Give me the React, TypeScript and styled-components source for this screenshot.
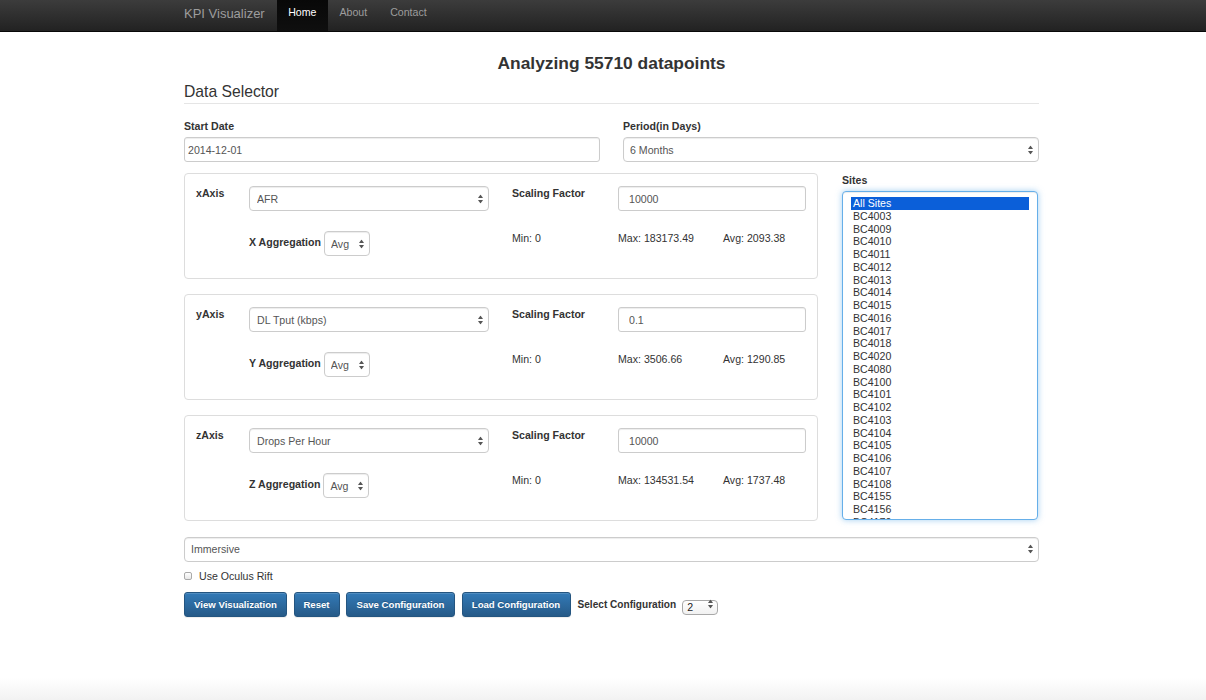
import React from "react";
import styled, { createGlobalStyle } from "styled-components";

const Global = createGlobalStyle`
  html, body { margin: 0; padding: 0; background: #fff; }
  body { font-family: "Liberation Sans", Arial, Helvetica, sans-serif; color: #333; }
  * { box-sizing: border-box; }
`;

const Page = styled.div`
  min-height: 700px;
  display: flex;
  flex-direction: column;
`;

const Navbar = styled.nav`
  height: 32px;
  flex-shrink: 0;
  background: linear-gradient(to bottom, #3c3c3c 0%, #222 100%);
  border-bottom: 1px solid #080808;
`;

const Container = styled.div`
  width: 855px;
  margin-left: calc(50% - 419px);
`;

const NavInner = styled(Container)`
  display: flex;
  height: 100%;
`;

const Brand = styled.a`
  font-size: 13px;
  line-height: 15px;
  padding-top: 5.5px;
  padding-right: 12px;
  color: #9d9d9d;
  text-decoration: none;
`;

const NavLink = styled.a<{ $active?: boolean }>`
  display: block;
  height: 100%;
  padding: 5px 11.5px 0;
  font-size: 10.6px;
  line-height: 14px;
  text-decoration: none;
  color: ${(p) => (p.$active ? "#fff" : "#9d9d9d")};
  background: ${(p) => (p.$active ? "linear-gradient(to bottom, #080808 0%, #0f0f0f 100%)" : "transparent")};
`;

const Title = styled.h1`
  margin: 21px 0 0;
  font-size: 17.4px;
  line-height: 20px;
  font-weight: bold;
  text-align: center;
  color: #333;
`;

const SectionHeading = styled.h2`
  margin: 10px 0 0;
  font-size: 15.7px;
  line-height: 18px;
  font-weight: normal;
  padding-bottom: 2px;
  border-bottom: 1px solid #e5e5e5;
  color: #333;
`;

const TopRow = styled.div`
  display: grid;
  grid-template-columns: 416px 416px;
  column-gap: 23px;
  margin-top: 16px;
`;

const FieldLabel = styled.label<{ $top?: number }>`
  display: block;
  font-weight: bold;
  font-size: 10.6px;
  line-height: 13px;
  margin-top: ${(p) => p.$top ?? 0}px;
  margin-bottom: 4px;
  color: #333;
`;

const TextInput = styled.input<{ $pad?: number }>`
  display: block;
  width: 100%;
  height: 25px;
  padding: 0 ${(p) => p.$pad ?? 11}px;
  font-family: inherit;
  font-size: 10.6px;
  color: #555;
  background: #fff;
  border: 1px solid #ccc;
  border-radius: 3px;
  box-shadow: inset 0 1px 1px rgba(0, 0, 0, 0.075);
  outline: none;
`;

const SelectWrap = styled.div<{ $w?: string }>`
  position: relative;
  width: ${(p) => p.$w ?? "100%"};
  height: 25px;
`;

const NativeSelect = styled.select<{ $pad?: number }>`
  appearance: none;
  -webkit-appearance: none;
  display: block;
  width: 100%;
  height: 100%;
  padding: 0 16px 0 ${(p) => p.$pad ?? 6}px;
  font-family: inherit;
  font-size: 10.6px;
  color: #555;
  background: #fff;
  border: 1px solid #ccc;
  border-radius: 4px;
  box-shadow: inset 0 1px 1px rgba(0, 0, 0, 0.075);
  outline: none;
`;

const ArrowIcon = styled.svg<{ $right?: number }>`
  position: absolute;
  right: ${(p) => p.$right ?? 7}px;
  top: 50%;
  transform: translateY(-50%);
  pointer-events: none;
`;

const Arrows = ({ right }: { right?: number }) => (
  <ArrowIcon $right={right} width="5" height="9" viewBox="0 0 5 9">
    <polygon points="0,3.6 2.5,0 5,3.6" fill="#555" />
    <polygon points="0,5.4 5,5.4 2.5,9" fill="#555" />
  </ArrowIcon>
);

const Select = ({ value, w, pad, right }: { value: string; w?: string; pad?: number; right?: number }) => (
  <SelectWrap $w={w}>
    <NativeSelect $pad={pad} defaultValue={value}>
      <option>{value}</option>
    </NativeSelect>
    <Arrows right={right} />
  </SelectWrap>
);

const MainRow = styled.div`
  display: grid;
  grid-template-columns: 634px 196px;
  column-gap: 24px;
  margin-top: 11px;
  align-items: start;
`;

const PanelStack = styled.div`
  display: flex;
  flex-direction: column;
  gap: 15.5px;
`;

const Panel = styled.div`
  border: 1px solid #ddd;
  border-radius: 4px;
  background: #fff;
  padding: 12px 11px 21.5px;
  display: grid;
  grid-template-columns: 53px 240px 23px 106px 105px 83px;
  grid-template-rows: 25px 25px;
  row-gap: 20px;
`;

const CellLabel = styled.div<{ $col: number }>`
  grid-column: ${(p) => p.$col};
  font-weight: bold;
  font-size: 10.6px;
  line-height: 13px;
  padding-top: 1px;
  color: #333;
`;

const CellText = styled.div<{ $col: number }>`
  grid-column: ${(p) => p.$col};
  font-size: 10.6px;
  line-height: 13px;
  padding-top: 1px;
  color: #333;
  white-space: nowrap;
`;

const CellControl = styled.div<{ $col: string }>`
  grid-column: ${(p) => p.$col};
`;

const AggGroup = styled.div`
  grid-column: 2;
  display: flex;
  align-items: center;
  gap: 3px;
`;

const AggLabel = styled.span`
  font-weight: bold;
  font-size: 10.6px;
  line-height: 13px;
  margin-top: -2px;
  color: #333;
`;

const SitesCol = styled.div`
  display: flex;
  flex-direction: column;
`;

const ListBox = styled.div`
  height: 329px;
  overflow: hidden;
  border: 1px solid #66afe9;
  border-radius: 4px;
  background: #fff;
  box-shadow: inset 0 1px 1px rgba(0, 0, 0, 0.075), 0 0 6px rgba(102, 175, 233, 0.6);
  padding: 5px 8px 0;
`;

const ListOption = styled.div<{ $selected?: boolean }>`
  font-size: 10.6px;
  line-height: 12.75px;
  padding-left: 2px;
  white-space: nowrap;
  color: ${(p) => (p.$selected ? "#fff" : "#333")};
  background: ${(p) => (p.$selected ? "#0b5fd9" : "transparent")};
`;

const ModeRow = styled.div`
  margin-top: 16px;
`;

const CheckRow = styled.label`
  display: flex;
  align-items: center;
  gap: 7px;
  margin-top: 8px;
  height: 13px;
  font-size: 10.6px;
  color: #333;
`;

const CheckBox = styled.span`
  width: 8px;
  height: 8px;
  border: 1px solid #aaa;
  border-radius: 2px;
  background: linear-gradient(to bottom, #fff, #e8e8e8);
`;

const ButtonRow = styled.div`
  display: flex;
  align-items: center;
  gap: 6.5px;
  margin-top: 9px;
`;

const Button = styled.button<{ $w: number }>`
  width: ${(p) => p.$w}px;
  height: 25px;
  padding: 0;
  font-family: inherit;
  font-size: 9.6px;
  font-weight: bold;
  color: #fff;
  text-shadow: 0 -1px 0 rgba(0, 0, 0, 0.2);
  background: linear-gradient(to bottom, #337ab7 0%, #265a88 100%);
  border: 1px solid #245580;
  border-radius: 3px;
  box-shadow: inset 0 1px 0 rgba(255, 255, 255, 0.15), 0 1px 1px rgba(0, 0, 0, 0.075);
`;

const ConfigLabel = styled.span`
  font-weight: bold;
  font-size: 10.1px;
  color: #333;
  margin-left: 0.5px;
`;

const MiniSelectWrap = styled.div`
  position: relative;
  width: 36px;
  height: 15px;
  margin-left: -0.5px;
`;

const MiniSelect = styled.select`
  appearance: none;
  -webkit-appearance: none;
  width: 100%;
  height: 100%;
  padding: 0 0 0 4px;
  font-family: inherit;
  font-size: 10.6px;
  line-height: 13px;
  color: #222;
  background: linear-gradient(to bottom, #fff, #f1f1f1);
  border: 1px solid #a8a8a8;
  border-radius: 4px;
  outline: none;
`;

const Spacer = styled.div`
  flex: 1;
`;

const Footer = styled.div`
  height: 22px;
  background: linear-gradient(to bottom, #fff 0%, #f2f2f2 100%);
`;

const sites = [
  "All Sites", "BC4003", "BC4009", "BC4010", "BC4011", "BC4012", "BC4013", "BC4014",
  "BC4015", "BC4016", "BC4017", "BC4018", "BC4020", "BC4080", "BC4100", "BC4101",
  "BC4102", "BC4103", "BC4104", "BC4105", "BC4106", "BC4107", "BC4108", "BC4155",
  "BC4156", "BC4170",
];

const axes = [
  { name: "xAxis", agg: "X Aggregation", metric: "AFR", scale: "10000", max: "183173.49", avg: "2093.38" },
  { name: "yAxis", agg: "Y Aggregation", metric: "DL Tput (kbps)", scale: "0.1", max: "3506.66", avg: "1290.85" },
  { name: "zAxis", agg: "Z Aggregation", metric: "Drops Per Hour", scale: "10000", max: "134531.54", avg: "1737.48" },
];

export default function App() {
  return (
    <Page>
      <Global />
      <Navbar>
        <NavInner>
          <Brand href="#">KPI Visualizer</Brand>
          <NavLink $active href="#">Home</NavLink>
          <NavLink href="#">About</NavLink>
          <NavLink href="#">Contact</NavLink>
        </NavInner>
      </Navbar>
      <Container>
        <Title>Analyzing 55710 datapoints</Title>
        <SectionHeading>Data Selector</SectionHeading>
        <TopRow>
          <div>
            <FieldLabel>Start Date</FieldLabel>
            <TextInput $pad={3} readOnly value="2014-12-01" />
          </div>
          <div>
            <FieldLabel>Period(in Days)</FieldLabel>
            <Select value="6 Months" pad={6} right={6} />
          </div>
        </TopRow>
        <MainRow>
          <PanelStack>
            {axes.map((a) => (
              <Panel key={a.name}>
                <CellLabel $col={1}>{a.name}</CellLabel>
                <CellControl $col="2">
                  <Select value={a.metric} pad={7} right={6} />
                </CellControl>
                <CellLabel $col={4}>Scaling Factor</CellLabel>
                <CellControl $col="5 / span 2">
                  <TextInput $pad={10} readOnly value={a.scale} />
                </CellControl>
                <AggGroup>
                  <AggLabel>{a.agg}</AggLabel>
                  <Select value="Avg" w="46px" pad={6} right={6} />
                </AggGroup>
                <CellText $col={4}>Min: 0</CellText>
                <CellText $col={5}>Max: {a.max}</CellText>
                <CellText $col={6}>Avg: {a.avg}</CellText>
              </Panel>
            ))}
          </PanelStack>
          <SitesCol>
            <FieldLabel $top={1}>Sites</FieldLabel>
            <ListBox role="listbox">
              {sites.map((s, i) => (
                <ListOption key={s} $selected={i === 0}>{s}</ListOption>
              ))}
            </ListBox>
          </SitesCol>
        </MainRow>
        <ModeRow>
          <Select value="Immersive" pad={6} right={6} />
        </ModeRow>
        <CheckRow>
          <CheckBox />
          Use Oculus Rift
        </CheckRow>
        <ButtonRow>
          <Button $w={103}>View Visualization</Button>
          <Button $w={46}>Reset</Button>
          <Button $w={109}>Save Configuration</Button>
          <Button $w={109}>Load Configuration</Button>
          <ConfigLabel>Select Configuration</ConfigLabel>
          <MiniSelectWrap>
            <MiniSelect defaultValue="2">
              <option>2</option>
            </MiniSelect>
            <Arrows right={5} />
          </MiniSelectWrap>
        </ButtonRow>
      </Container>
      <Spacer />
      <Footer />
    </Page>
  );
}
